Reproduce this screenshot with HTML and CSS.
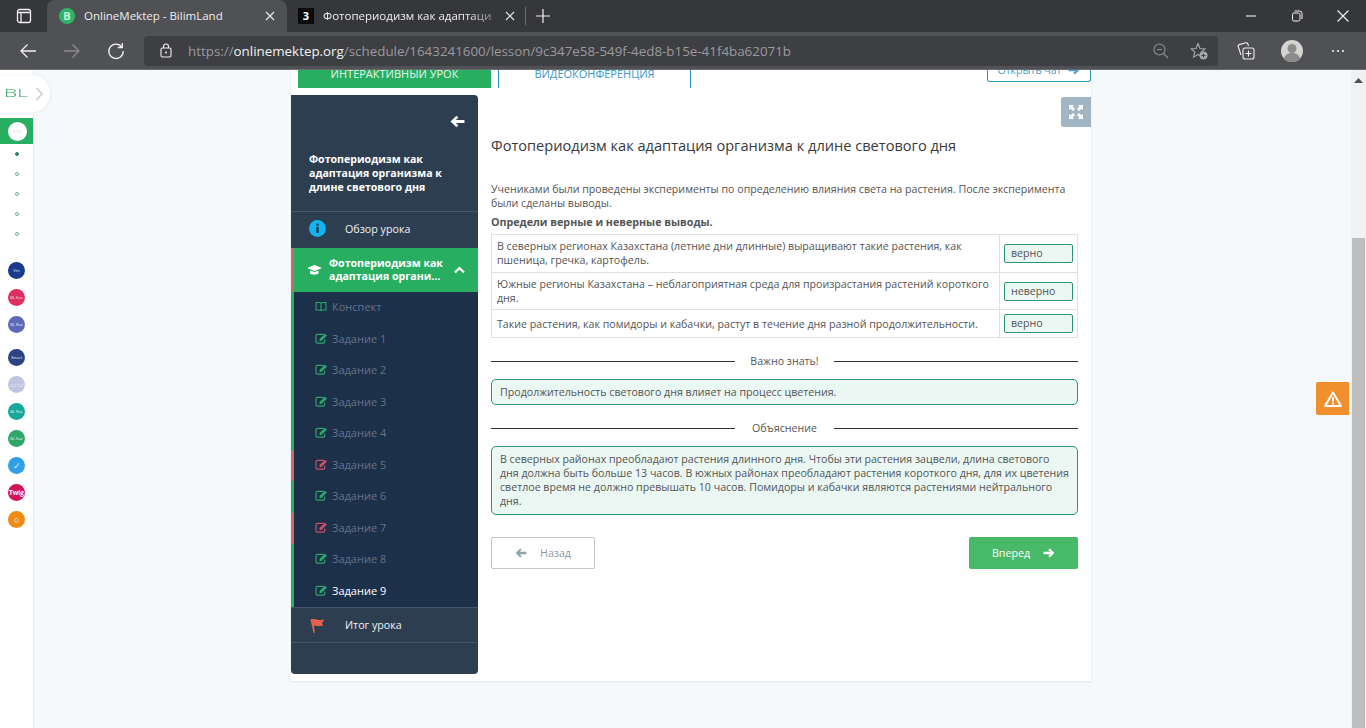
FILE: index.html
```html
<!DOCTYPE html>
<html lang="ru">
<head>
<meta charset="utf-8">
<title>OnlineMektep - BilimLand</title>
<link rel="stylesheet" href="styles.css">
</head>
<body>
<svg class="defs" width="0" height="0">
  <symbol id="edit" viewBox="0 0 14 12">
    <path d="M9.5 1.5H2.5A1.5 1.5 0 0 0 1 3v6.5A1.5 1.5 0 0 0 2.5 11H9a1.5 1.5 0 0 0 1.500-1.500V7" fill="none" stroke="currentColor" stroke-width="1.300"/>
    <path d="M5 6.200 10.800 .8 13 2.800 7.200 8.500 4.800 9z" fill="currentColor"/>
  </symbol>
  <symbol id="arrow" viewBox="0 0 14 12">
    <path d="M0.500 6 6 .6 7.800 2.400 5.300 4.500H13.500V7.500H5.300L7.800 9.600 6 11.400z" fill="currentColor"/>
  </symbol>
</svg>

<header class="chrome">
  <div class="tabstrip">
    <svg class="vtabs" width="16" height="16" viewBox="0 0 16 16"><rect x="1.500" y="1.500" width="13" height="13" rx="2" fill="none" stroke="#f2f2f2" stroke-width="1.300"/><path d="M1.500 4.500h13M5 4.500v10" stroke="#f2f2f2" stroke-width="1.300" fill="none"/></svg>
    <div class="tab tab-active">
      <span class="favicon-b">B</span>
      <span class="tab-title">OnlineMektep - BilimLand</span>
      <svg class="tab-x" width="10" height="10" viewBox="0 0 10 10"><path d="M1 1l8 8M9 1l-8 8" stroke="#e8e8e8" stroke-width="1.200"/></svg>
    </div>
    <div class="tab tab-idle">
      <span class="favicon-3">3</span>
      <span class="tab-title tab-fade">Фотопериодизм как адаптация</span>
      <svg class="tab-x" width="10" height="10" viewBox="0 0 10 10"><path d="M1 1l8 8M9 1l-8 8" stroke="#e8e8e8" stroke-width="1.200"/></svg>
    </div>
    <span class="tab-sep"></span>
    <svg class="tab-plus" width="14" height="14" viewBox="0 0 14 14"><path d="M7 0v14M0 7h14" stroke="#f2f2f2" stroke-width="1.200"/></svg>
    <div class="winctl">
      <svg width="12" height="12" viewBox="0 0 12 12"><path d="M1 6h10" stroke="#f2f2f2" stroke-width="1.100"/></svg>
      <svg width="12" height="12" viewBox="0 0 12 12"><rect x="1.500" y="3" width="7.500" height="8" rx="1.500" fill="none" stroke="#f2f2f2"/><path d="M3.500 1h5A2.500 2.500 0 0 1 11 3.500V9" fill="none" stroke="#f2f2f2"/></svg>
      <svg width="12" height="12" viewBox="0 0 12 12"><path d="M.5.500l11 11M11.500.500l-11 11" stroke="#f2f2f2" stroke-width="1.100"/></svg>
    </div>
  </div>
  <div class="toolbar">
    <svg class="nav-ic" width="18" height="16" viewBox="0 0 18 16"><path d="M17 8H2M8.500 1.500 2 8l6.500 6.500" fill="none" stroke="#f0f0f0" stroke-width="1.300"/></svg>
    <svg class="nav-ic" width="18" height="16" viewBox="0 0 18 16"><path d="M1 8h15M9.500 1.500 16 8l-6.500 6.500" fill="none" stroke="#8a8b8e" stroke-width="1.300"/></svg>
    <svg class="nav-ic" width="18" height="18" viewBox="0 0 18 18"><path d="M14.800 5A7.200 7.200 0 1 0 16.200 9" fill="none" stroke="#f0f0f0" stroke-width="1.300"/><path d="M15.300 1v4.500h-4.500" fill="none" stroke="#f0f0f0" stroke-width="1.300"/></svg>
    <div class="omnibox">
      <svg class="lock" width="12" height="15" viewBox="0 0 12 15"><rect x="1" y="5" width="10" height="9" rx="1.500" fill="none" stroke="#f0f0f0" stroke-width="1.100"/><path d="M3.500 5V3.500a2.500 2.500 0 0 1 5 0V5" fill="none" stroke="#f0f0f0" stroke-width="1.100"/><circle cx="6" cy="9.500" r="1" fill="#f0f0f0"/></svg>
      <span class="url"><span class="url-dim">https://</span><span class="url-host">onlinemektep.org</span><span class="url-dim">/schedule/1643241600/lesson/9c347e58-549f-4ed8-b15e-41f4ba62071b</span></span>
      <svg class="omni-zoom" width="16" height="16" viewBox="0 0 16 16"><circle cx="6.500" cy="6.500" r="5.500" fill="none" stroke="#8f9094" stroke-width="1.100"/><path d="M10.500 10.500 15 15M4 6.500h5" stroke="#8f9094" stroke-width="1.100"/></svg>
      <svg class="omni-star" width="18" height="18" viewBox="0 0 18 18"><path d="M8 1.500 10 6.500l5 .4-3.800 3.300 1.200 4.900L8 12.500l-4.400 2.600 1.200-4.900L1 6.900l5-.4z" fill="none" stroke="#a8a9ac" stroke-width="1.100"/><circle cx="13.500" cy="13.500" r="4" fill="#a8a9ac"/><path d="M13.500 11.500v4M11.500 13.500h4" stroke="#3e3f43"/></svg>
    </div>
    <svg class="tool-coll" width="18" height="18" viewBox="0 0 18 18"><rect x="6" y="6" width="11" height="11" rx="2" fill="none" stroke="#f0f0f0" stroke-width="1.100"/><path d="M11.500 8.500v6M8.500 11.500h6" stroke="#f0f0f0" stroke-width="1.100"/><path d="M4 13 1.200 4.500a1.500 1.500 0 0 1 1-1.900L9 .8a1.500 1.500 0 0 1 1.800 1L11.500 4" fill="none" stroke="#f0f0f0" stroke-width="1.100"/></svg>
    <svg class="tool-avatar" width="22" height="22" viewBox="0 0 22 22"><circle cx="11" cy="11" r="11" fill="#d4d4d2"/><circle cx="11" cy="8.500" r="4.500" fill="#8c8c8a"/><path d="M3 19c1-4.500 4-6 8-6s7 1.500 8 6a11 11 0 0 1-16 0z" fill="#8c8c8a"/></svg>
    <svg class="tool-more" width="14" height="4" viewBox="0 0 14 4"><circle cx="2" cy="2" r="1.100" fill="#f0f0f0"/><circle cx="7" cy="2" r="1.100" fill="#f0f0f0"/><circle cx="12" cy="2" r="1.100" fill="#f0f0f0"/></svg>
  </div>
</header>

<div class="viewport">
  <nav class="rail">
    <div class="rail-brand"><span class="brand-text">BL</span><svg width="8" height="14" viewBox="0 0 8 14"><path d="M1.500 1 7 7l-5.500 6" fill="none" stroke="#c9cdd0" stroke-width="1.600"/></svg></div>
    <div class="rail-active"><span class="rail-logo">○○○</span></div>
    <div class="rail-dots">
      <span class="dot dot-on"></span><span class="dot"></span><span class="dot"></span><span class="dot"></span><span class="dot"></span>
    </div>
    <div class="rail-apps">
      <span class="app c1">Virt</span>
      <span class="app c2">BL Kaz</span>
      <span class="app c3 gap-after">BL Rus</span>
      <span class="app c4">Smart</span>
      <span class="app c5">▭▭</span>
      <span class="app c6">BL Rus</span>
      <span class="app c7">BL Kaz</span>
      <span class="app c8">✓</span>
      <span class="app c9 app-twig">Twig</span>
      <span class="app c10">☺</span>
    </div>
  </nav>

  <main class="stage">
    <div class="card">
      <div class="card-tabs">
        <a class="lesson-tab lesson-tab-on">ИНТЕРАКТИВНЫЙ УРОК</a>
        <a class="lesson-tab lesson-tab-off">ВИДЕОКОНФЕРЕНЦИЯ</a>
        <a class="chat-btn">Открыть чат <svg width="14" height="10"><use href="#arrow"/></svg></a>
      </div>
      <div class="lesson">
        <aside class="side">
          <div class="side-head">
            <svg class="side-back" width="15" height="13"><use href="#arrow"/></svg>
            <h2 class="side-title">Фотопериодизм как адаптация организма к длине светового дня</h2>
          </div>
          <div class="side-row side-over">
            <svg class="side-ic" width="17" height="17" viewBox="0 0 17 17"><circle cx="8.500" cy="8.500" r="8.500" fill="#12b3ee"/><rect x="7.300" y="7" width="2.400" height="6" fill="#1f3a56"/><rect x="7.300" y="3.600" width="2.400" height="2.200" fill="#1f3a56"/></svg>
            <span>Обзор урока</span>
          </div>
          <div class="side-active">
            <svg class="cap" width="15" height="12" viewBox="0 0 15 12"><path d="M7.500 1 15 4 7.500 7 0 4z" fill="#fff"/><path d="M3 6.500v3c1.500 1.500 6.500 1.500 8.500 0v-3l-4 1.600z" fill="#fff"/></svg>
            <span class="side-active-text">Фотопериодизм как адаптация органи...</span>
            <svg class="chev" width="11" height="8" viewBox="0 0 11 8"><path d="M1 6.500 5.500 2 10 6.500" fill="none" stroke="#fff" stroke-width="2.200"/></svg>
          </div>
          <ul class="sub">
            <li class="sub-row sub-book"><svg width="12" height="11" viewBox="0 0 12 11"><path d="M1 1.500h3.500C5.300 1.500 6 2 6 3c0-1 .7-1.500 1.500-1.500H11v7.500H7.500C6.700 9 6 9.500 6 10c0-.5-.7-1-1.500-1H1zM6 3v7" fill="none" stroke="currentColor" stroke-width="1.100"/></svg><span>Конспект</span></li>
            <li class="sub-row"><svg width="13" height="11"><use href="#edit"/></svg><span>Задание 1</span></li>
            <li class="sub-row"><svg width="13" height="11"><use href="#edit"/></svg><span>Задание 2</span></li>
            <li class="sub-row"><svg width="13" height="11"><use href="#edit"/></svg><span>Задание 3</span></li>
            <li class="sub-row"><svg width="13" height="11"><use href="#edit"/></svg><span>Задание 4</span></li>
            <li class="sub-row bad"><svg width="13" height="11"><use href="#edit"/></svg><span>Задание 5</span></li>
            <li class="sub-row"><svg width="13" height="11"><use href="#edit"/></svg><span>Задание 6</span></li>
            <li class="sub-row bad"><svg width="13" height="11"><use href="#edit"/></svg><span>Задание 7</span></li>
            <li class="sub-row"><svg width="13" height="11"><use href="#edit"/></svg><span>Задание 8</span></li>
            <li class="sub-row current"><svg width="13" height="11"><use href="#edit"/></svg><span>Задание 9</span></li>
          </ul>
          <div class="side-row side-final">
            <svg class="side-ic" width="16" height="15" viewBox="0 0 16 15"><path d="M1 1.500 3 .8 5.500 14.500 4 15z" fill="#e8604c"/><path d="M2.800 1.500c3-1.500 5 1 8 .5 1.500-.2 3-.5 4.200-.5-1 1.500-2 2.500-2.500 3.500.5 1 .8 1.500 1 2.500-3 1-5.500 .5-7 .3-1.300-.2-2.200 0-2.700.7z" fill="#e8604c"/></svg>
            <span>Итог урока</span>
          </div>
        </aside>

        <section class="task">
          <a class="expand"><svg width="14" height="14" viewBox="0 0 14 14"><path d="M0 0h5L3.500 1.500 6 4 4 6 1.500 3.500 0 5zM14 0v5l-1.500-1.500L10 6 8 4l2.500-2.500L9 0zM0 14V9l1.500 1.500L4 8l2 2-2.500 2.500L5 14zM14 14H9l1.500-1.500L8 10l2-2 2.500 2.500L14 9z" fill="#fff"/></svg></a>
          <h1 class="task-title">Фотопериодизм как адаптация организма к длине светового дня</h1>
          <p class="task-lead">Учениками были проведены эксперименты по определению влияния света на растения. После эксперимента были сделаны выводы.</p>
          <p class="task-ask">Определи верные и неверные выводы.</p>
          <table class="claims">
            <tr class="r1"><td>В северных регионах Казахстана (летние дни длинные) выращивают такие растения, как пшеница, гречка, картофель.</td><td class="ans"><span class="ans-box">верно</span></td></tr>
            <tr class="r2"><td>Южные регионы Казахстана – неблагоприятная среда для произрастания растений короткого дня.</td><td class="ans"><span class="ans-box">неверно</span></td></tr>
            <tr class="r3"><td>Такие растения, как помидоры и кабачки, растут в течение дня разной продолжительности.</td><td class="ans"><span class="ans-box">верно</span></td></tr>
          </table>
          <div class="divider"><span>Важно знать!</span></div>
          <div class="note">Продолжительность светового дня влияет на процесс цветения.</div>
          <div class="divider"><span>Объяснение</span></div>
          <div class="note note-long">В северных районах преобладают растения длинного дня. Чтобы эти растения зацвели, длина светового <span class="line-whole">дня должна быть больше 13 часов. В южных районах преобладают растения короткого дня, для их цветения</span> светлое время не должно превышать 10 часов. Помидоры и кабачки являются растениями нейтрального дня.</div>
          <div class="task-nav">
            <a class="btn btn-back"><svg width="12" height="10"><use href="#arrow"/></svg><span>Назад</span></a>
            <a class="btn btn-next"><span>Вперед</span><svg class="flip" width="12" height="10"><use href="#arrow"/></svg></a>
          </div>
        </section>
      </div>
    </div>
    <a class="warn"><svg width="18" height="16" viewBox="0 0 18 16"><path d="M9 1.500 17 15H1z" fill="none" stroke="#fff" stroke-width="2" stroke-linejoin="round"/><path d="M9 6v4.500M9 11.500v2" stroke="#fff" stroke-width="1.800"/></svg></a>
  </main>

  <div class="scrollbar"><svg class="scroll-up" width="9" height="5" viewBox="0 0 9 5"><path d="M4.500 0 9 5H0z" fill="#505050"/></svg><span class="scroll-thumb"></span></div>
</div>
</body>
</html>
```
FILE: styles.css
```css
* { box-sizing: border-box; }
html, body { margin: 0; height: 100%; overflow: hidden; }
body { display: flex; flex-direction: column; height: 728px; font-family: "Open Sans", sans-serif; color: #555; background: #f5f9fc; }
.defs { position: absolute; }
h1, h2, p, ul { margin: 0; padding: 0; }
ul { list-style: none; }

/* browser chrome */
.chrome { flex: none; height: 70px; display: flex; flex-direction: column; font-family: "Open Sans", sans-serif; }
.tabstrip { height: 32px; background: #36373b; display: flex; align-items: flex-end; position: relative; }
.vtabs { margin: 0 15px 8px 16px; }
.tab { height: 32px; display: flex; align-items: center; color: #eee; font-size: 11.500px; }
.tab-active { width: 240px; background: #505155; border-radius: 8px 8px 0 0; padding: 0 12px 1px 12px; }
.tab-idle { width: 240px; padding: 0 12px 1px 11px; }
.favicon-b { flex: none; width: 16px; height: 16px; border-radius: 50%; background: #2fb46a; color: #c7f5d8; font: 700 11px/16px "Open Sans", sans-serif; text-align: center; margin-right: 9px; }
.favicon-3 { flex: none; width: 16px; height: 16px; background: #0a0a0a; color: #fff; font: 700 11px/16px "Open Sans", sans-serif; text-align: center; margin-right: 9px; }
.tab-title { flex: 1; white-space: nowrap; overflow: hidden; }
.tab-fade { -webkit-mask-image: linear-gradient(90deg, #000 85%, #0006); mask-image: linear-gradient(90deg, #000 85%, #0006); margin-right: 4px; }
.tab-x { flex: none; margin-left: 9px; }
.tab-sep { width: 1px; height: 18px; background: #6a6b6f; margin: 0 0 7px -2px; }
.tab-plus { margin: 0 0 9px 10px; }
.winctl { margin-left: auto; display: flex; gap: 34px; padding: 0 17px 10px 0; }
.toolbar { height: 38px; background: #505155; display: flex; align-items: center; border-bottom: 1px solid #6a6b6e; }
.nav-ic { flex: none; margin-left: 19px; margin-right: 7px; }
.nav-ic + .nav-ic { margin-left: 19px; }
.nav-ic + .nav-ic + .nav-ic { margin-left: 19px; margin-right: 0; }
.omnibox { margin-left: 19px; width: 1074px; height: 30px; background: #3e3f43; border-radius: 4px; display: flex; align-items: center; padding-left: 16px; }
.lock { flex: none; margin-right: 16px; }
.url { font-size: 13.370px; white-space: nowrap; flex: 1; }
.url-dim { color: #9a9b9e; }
.url-host { color: #f2f2f2; }
.omni-zoom { flex: none; margin-right: 21px; }
.omni-star { flex: none; margin-right: 10px; }
.tool-coll { flex: none; margin-left: 19px; }
.tool-avatar { flex: none; margin-left: 26px; }
.tool-more { flex: none; margin-left: 28px; }

/* page frame */
.viewport { flex: 1; min-height: 0; display: flex; position: relative; overflow: hidden; }
.rail { flex: none; width: 34px; background: #fff; border-right: 1px solid #e9edf1; position: relative; padding-top: 48px; }
.rail-brand { position: absolute; left: 0; top: 5px; width: 50px; height: 37px; background: #fff; border-radius: 0 18px 18px 0; display: flex; align-items: center; padding-left: 4px; gap: 2px; box-shadow: 1px 0 3px rgba(0,0,0,.06); }
.brand-text { font: 300 10.500px/1 "Open Sans", sans-serif; color: #2ca35f; transform: scaleX(2); transform-origin: left; width: 29px; }
.rail-active { height: 26px; background: #27ae60; display: flex; align-items: center; justify-content: center; }
.rail-logo { width: 19px; height: 19px; border-radius: 50%; background: #fff; color: #89b79b; font-size: 5px; line-height: 19px; text-align: center; margin-left: 1px; }
.rail-dots { display: flex; flex-direction: column; align-items: center; gap: 16px; padding-top: 8px; height: 111px; }
.dot { width: 4px; height: 4px; border-radius: 50%; border: 1px solid #6fa98a; }
.dot-on { background: #2b8a5c; border-color: #2b8a5c; }
.rail-apps { display: flex; flex-direction: column; align-items: center; gap: 10px; padding-top: 7px; }
.app { width: 17px; height: 17px; border-radius: 50%; color: #e9edf7; font-size: 4px; line-height: 17px; text-align: center; white-space: nowrap; overflow: hidden; }
.gap-after { margin-bottom: 6px; }
.c1 { background: #1b3a8c; } .c2 { background: #df2f60; } .c3 { background: #5d68b8; } .c4 { background: #2b4380; }
.c5 { background: #c2c2e2; font-size: 7px; } .c6 { background: #17a89c; } .c7 { background: #2fa768; }
.c8 { background: #2f9fe8; font-size: 9px; } .c9 { background: #d2135a; } .c10 { background: #ef8a12; font-size: 8px; }
.app-twig { font: 700 6.500px/17px "Open Sans", sans-serif; color: #fff; }

.stage { flex: 1; min-width: 0; position: relative; display: flex; justify-content: center; }
.card { width: 800px; height: 611px; margin-left: -3px; background: #fff; box-shadow: 0 1px 2px rgba(0,0,0,.08); display: flex; flex-direction: column; padding-bottom: 7px; }
.card-tabs { flex: none; height: 25px; display: flex; align-items: flex-start; padding-left: 7px; overflow: hidden; }
.lesson-tab { height: 18px; font-size: 11px; line-height: 6px; text-align: center; display: flex; align-items: flex-end; justify-content: center; padding-bottom: 11px; }
.lesson-tab-on { width: 193px; background: #27ae60; color: #e6f6ec; }
.lesson-tab-off { width: 193px; margin-left: 7px; color: #3b97c9; border-left: 1px solid #2d8fb5; border-right: 1px solid #2d8fb5; }
.chat-btn { margin-left: auto; width: 104px; height: 12px; border: 1px solid #2a9cb0; border-top: 0; border-radius: 0 0 3px 3px; color: #4c9ec9; font-size: 10.500px; line-height: 0; display: flex; align-items: flex-start; justify-content: center; gap: 5px; overflow: hidden; }
.chat-btn svg { transform: scaleX(-1); color: #4c9ec9; margin-top: -5px; }

.lesson { flex: 1; min-height: 0; display: flex; }

/* sidebar */
.side { flex: none; width: 187px; background: #2d3e50; border-radius: 0 4px 4px 4px; display: flex; flex-direction: column; color: #fff; }
.side-head { height: 116px; position: relative; padding: 57px 18px 0; }
.side-back { position: absolute; right: 13px; top: 20px; color: #fff; }
.side-title { font-size: 10.600px; line-height: 14px; font-weight: 700; }
.side-row { display: flex; align-items: center; font-size: 11px; padding-left: 18px; font-weight: 600; }
.side-over { height: 37px; border-top: 1px solid #46566a; padding-bottom: 3px; }
.side-final { height: 36px; border-top: 1px solid #46566a; border-bottom: 1px solid #46566a; }
.side-over span, .side-final span { margin-left: 19px; font-weight: 400; color: #f1f3f5; font-size: 10.700px; }
.side-ic { flex: none; width: 17px; }
.side-active { height: 44px; background: #27ae60; border-left: 3px solid #c9696c; display: flex; align-items: center; padding-left: 13px; color: #fff; }
.cap { flex: none; }
.side-active-text { width: 122px; margin-left: 7px; font-size: 10.600px; line-height: 13px; font-weight: 700; }
.chev { flex: none; margin-left: 3px; }
.sub { flex: none; background: #1c3049; }
.sub-row { height: 31.500px; display: flex; align-items: center; padding-left: 21px; padding-bottom: 2px; border-left: 3px solid #27ae60; font-size: 11px; color: #647387; gap: 4px; }
.sub-book { gap: 5px; }
.sub-row svg { flex: none; color: #2ea56d; }
.sub-row.bad { border-left-color: #c9696c; }
.sub-row.bad svg { color: #c8506a; }
.sub-row.current { color: #fff; }

/* task */
.task { flex: 1; min-width: 0; position: relative; padding: 40px 13px 0; font-size: 10.630px; line-height: 14px; color: #555; }
.expand { position: absolute; right: 0; top: 2px; width: 30px; height: 30px; background: #a2b5c4; border-radius: 3px 0 0 3px; display: flex; align-items: center; justify-content: center; }
.task-title { font-size: 14.600px; line-height: 20px; font-weight: 400; color: #3a3a3a; }
.task-lead { margin-top: 27px; }
.task-ask { margin-top: 5px; font-weight: 700; font-size: 10.700px; }
.claims { width: 100%; margin-top: 5px; border-collapse: collapse; table-layout: fixed; }
.claims td { border: 1px solid #e0e0e0; padding: 4px 5px; }
.claims .ans { width: 78px; padding: 0 4px; }
.r1 { height: 38px; } .r2 { height: 37px; } .r3 { height: 28px; }
.r1 td:first-child { padding: 3px 5px 5px; }
.ans-box { display: block; height: 19px; background: #eaf7f3; border: 1px solid #2a9379; border-radius: 2px; padding-left: 6px; line-height: 17px; }
.divider { margin-top: 13px; height: 20px; display: flex; align-items: center; justify-content: center; gap: 15px; }
.divider::before, .divider::after { content: ""; flex: 1; height: 1px; background: #333; }
.divider span { width: 69px; text-align: center; white-space: nowrap; }
.note { margin-top: 8px; background: #eaf7f3; border: 1px solid #2a9379; border-radius: 5px; padding: 5px 8px; }
.note-long { padding-bottom: 6px; }
.line-whole { display: block; white-space: nowrap; }
.task-nav { margin-top: 22px; display: flex; justify-content: space-between; }
.btn { height: 32px; border-radius: 2px; display: flex; align-items: center; justify-content: center; }
.btn-back { width: 104px; border: 1px solid #bcc4cc; color: #8d9aa6; gap: 13px; }
.btn-back svg { color: #8fa2b0; }
.btn-next { width: 109px; background: #48b968; color: #fff; gap: 13px; }
.flip { transform: scaleX(-1); }

.warn { position: absolute; right: 2px; top: 312px; width: 33px; height: 33px; background: #f18f2c; border-radius: 2px 0 0 2px; display: flex; align-items: center; justify-content: center; }

.scrollbar { flex: none; width: 15px; background: #f1f1f1; position: relative; padding-top: 168px; }
.scroll-up { position: absolute; left: 3px; top: 8px; }
.scroll-thumb { display: block; width: 13px; margin-left: 1px; height: 490px; background: #bdbdbd; }
```
